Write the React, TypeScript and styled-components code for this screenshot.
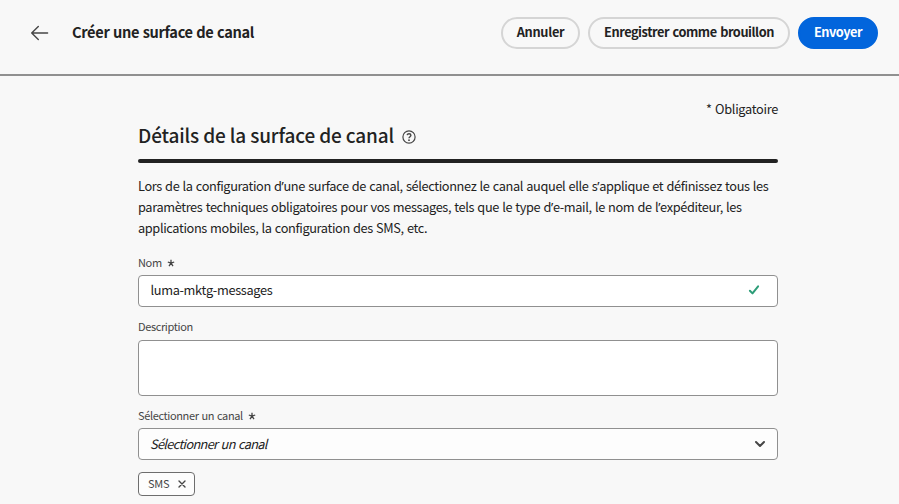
import React from "react";
import styled, { createGlobalStyle } from "styled-components";

const GlobalStyle = createGlobalStyle`
  * { box-sizing: border-box; }
  html, body { margin: 0; background: #f8f8f8; }
  body {
    height: 504px;
    overflow: hidden;
    font-family: "Noto Sans CJK SC", "Noto Sans", sans-serif;
    color: #222;
  }
  button, input, textarea { font-family: inherit; color: inherit; }
`;

const Header = styled.header`
  display: flex;
  align-items: center;
  height: 76px;
  padding: 0 21px 8px 30px;
  border-bottom: 2px solid #909090;
`;

const BackButton = styled.button`
  display: flex;
  width: 20px;
  height: 20px;
  margin-right: 22px;
  padding: 0;
  border: 0;
  background: none;
`;

const Title = styled.h1`
  flex: 1;
  margin: 0;
  padding-bottom: 2px;
  font-size: 14.6px;
  line-height: 20px;
  font-weight: 700;
  letter-spacing: -0.32px;
  word-spacing: 0.5px;
`;

const Actions = styled.div`
  display: flex;
  gap: 8px;
`;

const PillButton = styled.button<{ $width: number; $tracking: number; $accent?: boolean }>`
  display: flex;
  align-items: center;
  justify-content: center;
  width: ${(p) => p.$width}px;
  height: 32px;
  padding: 0 0 2px;
  border: 2px solid ${(p) => (p.$accent ? "#0265dc" : "#d5d5d5")};
  border-radius: 16px;
  background: ${(p) => (p.$accent ? "#0265dc" : "transparent")};
  color: ${(p) => (p.$accent ? "#fff" : "#222")};
  font-size: 12.75px;
  font-weight: 700;
  line-height: 20px;
  letter-spacing: ${(p) => p.$tracking}px;
  word-spacing: 1px;
  white-space: nowrap;
`;

const Main = styled.main`
  display: flex;
  flex-direction: column;
  width: 640px;
  margin-left: 138px;
  padding-top: 23px;
`;

const RequiredNote = styled.div`
  align-self: flex-end;
  font-size: 12.75px;
  line-height: 20px;
  letter-spacing: -0.29px;
  word-spacing: 0.8px;
`;

const SectionHeading = styled.div`
  display: flex;
  align-items: center;
  gap: 8px;
  height: 40px;
  padding-bottom: 8px;
`;

const SectionTitle = styled.h2`
  margin: 0;
  font-size: 19px;
  font-weight: 500;
  line-height: 28px;
  letter-spacing: -0.14px;
`;

const HelpIcon = styled.svg`
  margin-top: 3px;
`;

const Rule = styled.div`
  height: 4px;
  border-radius: 2px;
  background: #222;
`;

const Intro = styled.p`
  margin: 12px 0 0;
  font-size: 12.75px;
  line-height: 21px;
  letter-spacing: -0.36px;
  word-spacing: 0.7px;
  white-space: nowrap;
`;

const Apostrophe = styled.span`
  font-family: "Noto Sans", sans-serif;
  line-height: 1;
`;

const Field = styled.div<{ $top: number }>`
  display: flex;
  flex-direction: column;
  margin-top: ${(p) => p.$top}px;
`;

const Label = styled.label<{ $lift?: number }>`
  display: flex;
  align-items: center;
  gap: 5px;
  height: 24px;
  padding-bottom: ${(p) => p.$lift ?? 2}px;
  font-size: 11px;
  letter-spacing: -0.37px;
  word-spacing: 0.8px;
  color: #464646;
`;

const RequiredMark = styled.svg`
  margin-top: 1px;
`;

const Box = styled.div<{ $height: number; $tint?: boolean }>`
  display: flex;
  align-items: center;
  justify-content: space-between;
  height: ${(p) => p.$height}px;
  border: 1px solid #909090;
  border-radius: 4px;
  background: ${(p) => (p.$tint ? "#fdfdfd" : "#fff")};
`;

const TextValue = styled.span<{ $placeholder?: boolean }>`
  padding: 0 0 ${(p) => (p.$placeholder ? 1 : 3)}px ${(p) => (p.$placeholder ? 11 : 11.4)}px;
  font-size: 12.75px;
  line-height: 20px;
  font-style: ${(p) => (p.$placeholder ? "italic" : "normal")};
  letter-spacing: ${(p) => (p.$placeholder ? -0.66 : -0.31)}px;
  word-spacing: 1px;
`;

const FieldIcon = styled.svg<{ $right: number; $lift?: number }>`
  margin-right: ${(p) => p.$right}px;
  margin-bottom: ${(p) => p.$lift ?? 0}px;
`;

const Tag = styled.div`
  display: flex;
  align-items: center;
  gap: 9px;
  width: 57px;
  height: 24px;
  margin-top: 12px;
  padding-left: 9px;
  border: 1px solid #6e6e6e;
  border-radius: 4px;
  background: #fdfdfd;
  color: #464646;
  font-size: 11px;
  letter-spacing: -0.2px;
`;

const TagText = styled.span`
  padding-bottom: 2px;
  line-height: 16px;
`;

const Required = () => (
  <RequiredMark width="8" height="8" viewBox="0 0 8 8" fill="none" stroke="#464646" strokeWidth="1.3">
    <path d="M4 4.2V.7M4 4.2.8 3M4 4.2 7.2 3M4 4.2 2 7.1M4 4.2l2 2.9" />
  </RequiredMark>
);

export default function App() {
  return (
    <>
      <GlobalStyle />
      <Header>
        <BackButton aria-label="Retour">
          <svg width="20" height="20" viewBox="0 0 20 20" fill="none" stroke="#464646" strokeWidth="1.4" strokeLinecap="round" strokeLinejoin="round">
            <path d="M17.6 10H1.7M8.3 3.6 1.7 10l6.6 6.4" />
          </svg>
        </BackButton>
        <Title>Créer une surface de canal</Title>
        <Actions>
          <PillButton $width={79} $tracking={-0.3}>Annuler</PillButton>
          <PillButton $width={202} $tracking={-0.44}>Enregistrer comme brouillon</PillButton>
          <PillButton $width={80} $tracking={-0.47} $accent>Envoyer</PillButton>
        </Actions>
      </Header>
      <Main>
        <RequiredNote>* Obligatoire</RequiredNote>
        <SectionHeading>
          <SectionTitle>Détails de la surface de canal</SectionTitle>
          <HelpIcon width="14" height="14" viewBox="0 0 14 14" fill="none" stroke="#464646" strokeWidth="1.2">
            <circle cx="7" cy="7" r="6.1" />
            <path d="M5.1 5.2C5.4 4 6.2 3.7 7 3.7c1.1 0 1.9.6 1.9 1.6C8.9 6.6 7 6.8 7 8.3" strokeWidth="1.4" />
            <circle cx="7" cy="10.2" r=".9" fill="#464646" stroke="none" />
          </HelpIcon>
        </SectionHeading>
        <Rule />
        <Intro>
          Lors de la configuration d<Apostrophe>’</Apostrophe>une surface de canal, sélectionnez le canal auquel elle s<Apostrophe>’</Apostrophe>applique et définissez tous les
          <br />
          paramètres techniques obligatoires pour vos messages, tels que le type d<Apostrophe>’</Apostrophe>e-mail, le nom de l<Apostrophe>’</Apostrophe>expéditeur, les
          <br />
          applications mobiles, la configuration des SMS, etc.
        </Intro>
        <Field $top={13}>
          <Label>Nom <Required /></Label>
          <Box $height={32}>
            <TextValue>luma-mktg-messages</TextValue>
            <FieldIcon $right={17} $lift={2} width="12" height="12" viewBox="0 0 12 12" fill="none" stroke="#2d9d78" strokeWidth="2" strokeLinecap="round" strokeLinejoin="round">
              <path d="m1.9 6.7 2.6 2.7 5.6-7.1" />
            </FieldIcon>
          </Box>
        </Field>
        <Field $top={9}>
          <Label $lift={4}>Description</Label>
          <Box $height={56} />
        </Field>
        <Field $top={8}>
          <Label>Sélectionner un canal <Required /></Label>
          <Box $height={32} $tint>
            <TextValue $placeholder>Sélectionner un canal</TextValue>
            <FieldIcon $right={11} width="12" height="12" viewBox="0 0 12 12" fill="none" stroke="#464646" strokeWidth="2" strokeLinecap="round" strokeLinejoin="round">
              <path d="m2 4 4 4 4-4" />
            </FieldIcon>
          </Box>
        </Field>
        <Tag>
          <TagText>SMS</TagText>
          <svg width="8" height="8" viewBox="0 0 8 8" stroke="#464646" strokeWidth="1.4" strokeLinecap="round">
            <path d="m1 1 6 6M7 1 1 7" />
          </svg>
        </Tag>
      </Main>
    </>
  );
}
